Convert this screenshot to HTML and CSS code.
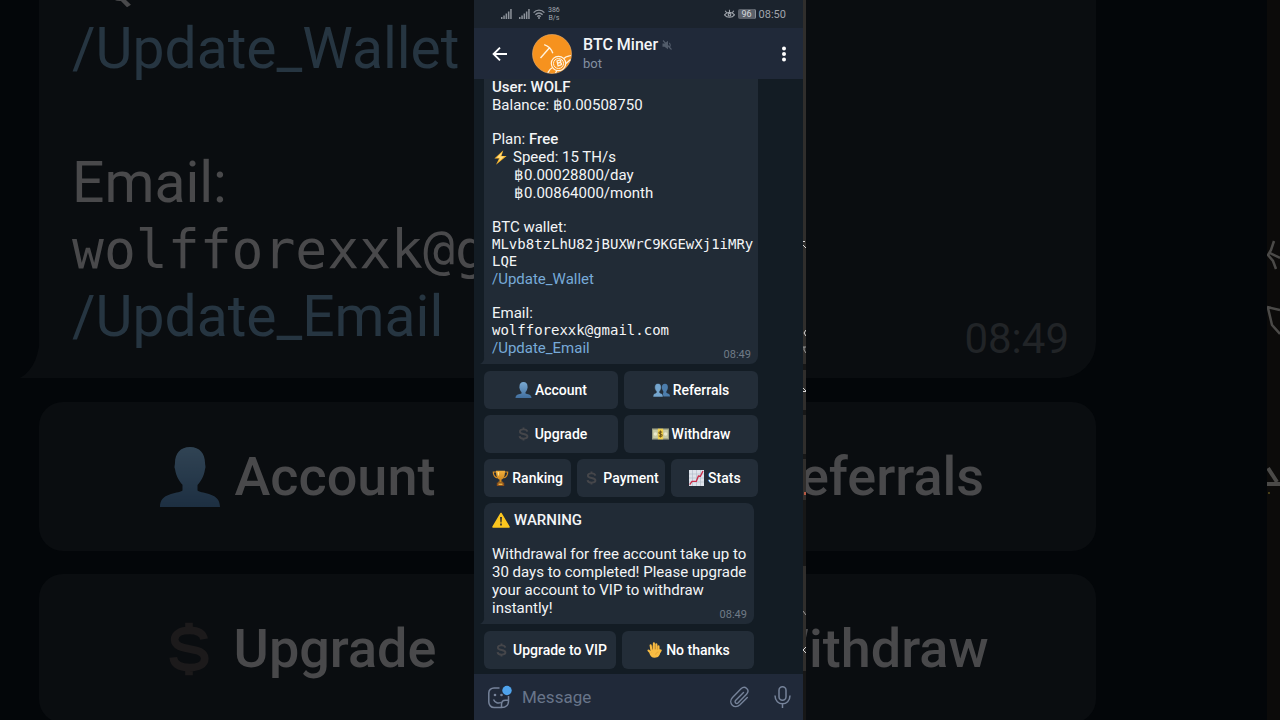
FILE: index.html
```html
<!DOCTYPE html>
<html lang="en">
<head>
<meta charset="utf-8">
<title>BTC Miner</title>
<link rel="stylesheet" href="styles.css">
</head>
<body>
<svg class="symbols" aria-hidden="true">
  <defs>
    <linearGradient id="blue" x1="0" y1="0" x2="0" y2="1"><stop offset="0" stop-color="#79a9d2"/><stop offset="1" stop-color="#416f9f"/></linearGradient>
    <linearGradient id="gold" x1="0" y1="0" x2="0" y2="1"><stop offset="0" stop-color="#f3b13c"/><stop offset="1" stop-color="#c77d17"/></linearGradient>
  </defs>
  <symbol id="person" viewBox="0 0 16 16"><path fill="url(#blue)" d="M8 0C5.4 0 4 1.800 4 4.200c0 .7-.3 1 0 1.700.3 2 1.200 3.300 2 4.200v1.500C4.500 12.600 0 12.100 0 16h16c0-3.900-4.500-3.400-6-4.400v-1.500c.8-.9 1.700-2.200 2-4.200.3-.7 0-1 0-1.700C12 1.800 10.600 0 8 0Z"/></symbol>
  <symbol id="people" viewBox="0 0 16 14"><path fill="#4c7dac" d="M11.300 1c-1.900 0-3 1.300-3 3.300 0 1.700.7 2.900 1.400 3.800v1.500L8.200 13H16c0-3.200-2.600-2.700-3.400-3.500V8.100c.8-.9 1.400-2.100 1.400-3.800C14 2.300 13.200 1 11.300 1Z"/><path fill="#74a5ce" stroke="#232d38" stroke-width=".5" d="M4.700.8C2.800.8 1.600 2.200 1.600 4.300c0 1.700.7 3 1.500 3.900v1.300C2.200 10.300 0 10 0 13.600h9.500c0-3.600-2.300-3.300-3.200-4.100V8.200c.8-.9 1.500-2.200 1.500-3.900C7.800 2.200 6.600.8 4.700.8Z"/></symbol>
  <symbol id="dollar" viewBox="0 0 12 16"><path fill="none" stroke="currentColor" stroke-width="2.200" d="M10.300 5.200C10 3.400 8.500 2.700 6.100 2.700c-2.600 0-4.200 1-4.200 2.600 0 3.800 8.600 1.600 8.600 5.400 0 1.700-1.800 2.600-4.300 2.600-2.800 0-4.500-.9-4.700-2.900M6 .5v2.500M6 13v2.500"/></symbol>
  <symbol id="cash" viewBox="0 0 16 12"><path fill="#c9cba6" d="M0 1h16v10H0z"/><path fill="#9ca083" d="M0 1h16v1H0zM0 10h16v1H0zM0 1h1v10H0zM15 1h1v10h-1z"/><circle cx="3.200" cy="6" r="1.600" fill="#eceacb"/><circle cx="12.800" cy="6" r="1.600" fill="#eceacb"/><path fill="#f1d14d" d="M5.500 1h5v10h-5z"/><path fill="none" stroke="#6e581c" stroke-width="1" d="M9.500 4.500C8.800 3.500 6.500 3.600 6.500 4.900 6.500 6.300 9.600 5.600 9.600 7.200c0 1.300-2.400 1.400-3.200.3M8 2.800v6.500"/></symbol>
  <symbol id="cup" viewBox="0 0 16 16"><path fill="none" stroke="#d88d22" stroke-width="1.200" d="M4 2H.8c0 3 1 5.200 4.200 6M12 2h3.200c0 3-1 5.200-4.200 6"/><path fill="url(#gold)" d="M3.500.7h9C12.500 6 11.500 8.600 9 9.500v2.200h1.400v1.100H5.600v-1.100H7V9.500C4.500 8.600 3.500 6 3.500.7Z"/><path fill="#8c4f1b" d="M4.300 12.600h7.400V16H4.300z"/><path fill="#e7b23f" d="M6 13.500h4V15H6z"/><path fill="#ffe08a" d="M5 2h1.500v4L5.500 5z"/></symbol>
  <symbol id="chart" viewBox="0 0 15 16"><path fill="#dfe4ec" d="M0 0h15v16H0z"/><path fill="none" stroke="#aeb8c8" stroke-width=".6" d="M3.500 0v16M7.500 0v16M11.500 0v16M0 4h15M0 8h15M0 12h15"/><path fill="none" stroke="#c92f4b" stroke-width="1.400" d="M.7 14.700 3 11.400l4.300 0L9.400 6l2 .2L14 1"/></symbol>
  <symbol id="hand" viewBox="0 0 15 16"><path fill="none" stroke="#f8bc43" stroke-width="2.100" stroke-linecap="round" d="M4.600 9 3.600 3.200M6.900 8V1.400M9.300 8V2.200M11.500 9V4.400M1.500 8.600l3.200 3.200M13.700 8.400 11.500 12"/><path fill="#f8bc43" d="M3.800 7.500 12.500 7l.8 2.500c-.5 4.500-2 6.200-5.500 6.200-3.300 0-4.500-2-5.500-4.500L4.500 11Z"/><path stroke="#d18e25" stroke-width=".5" fill="none" d="M5.600 3.500v4M8.100 3v4.500M10.400 4v4M11.500 10c-1.800.2-2.700 1.300-2.800 2.700"/></symbol>
  <symbol id="signal" viewBox="0 0 11 10"><path fill="#8d939b" d="M0 8h1.500v2H0zM2.300 6.500h1.500V10H2.300zM4.600 4.500h1.500V10H4.600zM6.900 2.500h1.500V10H6.900zM9.200 0h1.500v10H9.200z"/></symbol>
</svg>

<div class="stage">
  <div class="backdrop" aria-hidden="true">
    <div class="backdrop-main">
      <div class="big-bubble">
        <div class="mono">LQE</div>
        <div class="big-link">/Update_Wallet</div>
        <div>&nbsp;</div>
        <div>Email:</div>
        <div class="mono">wolfforexxk@gmail.com</div>
        <div class="big-link">/Update_Email</div>
        <span class="big-time">08:49</span>
        <svg class="big-tail" viewBox="0 0 20 46"><path fill="#0a0d10" d="M20 0C20 22 14 38 0 46H20Z"/></svg>
      </div>
      <div class="big-keys">
        <div class="big-key"><svg class="big-person"><use href="#person"/></svg>Account</div>
        <div class="big-key"><svg class="big-person"><use href="#people"/></svg>Referrals</div>
        <div class="big-key"><svg class="big-dollar"><use href="#dollar"/></svg>Upgrade</div>
        <div class="big-key"><svg class="big-person"><use href="#cash"/></svg>Withdraw</div>
      </div>
    </div>
    <div class="backdrop-edge">
      <svg viewBox="0 0 13 720" preserveAspectRatio="xMinYMin slice"><g fill="none" stroke="#4b4a48" stroke-width="2.500"><path d="M7 241 4 250 1 255 6 261 9 269M3 253 13 258M0 307 13 310M1 308 5 325 13 334"/><path d="M1 468 10 482M0 484H13" stroke-width="4"/></g><path fill="#463e18" d="M1 492h2v2H1z"/></svg>
    </div>
  </div>

  <main class="phone">
    <div class="screen">
      <div class="status">
        <svg class="signal"><use href="#signal"/></svg>
        <svg class="signal"><use href="#signal"/></svg>
        <svg class="wifi" viewBox="0 0 12 10"><g fill="none" stroke="#8d939b" stroke-width="1.300"><path d="M.6 3.600C3.500.2 8.500.2 11.400 3.600M2.400 5.700C4.500 3.400 7.500 3.400 9.600 5.700M4.200 7.600C5.300 6.500 6.700 6.500 7.800 7.600"/></g><circle cx="6" cy="9" r="1" fill="#8d939b"/></svg>
        <span class="rate">386<br>B/s</span>
        <svg class="eye" viewBox="0 0 11 10"><g fill="none" stroke="#a0a5ac" stroke-width="1.100"><path d="M.5 5.800C3 2.600 8 2.600 10.500 5.800 8 9 3 9 .5 5.800ZM5.500 3V.7M2.500 3.500 1.200 1.700M8.500 3.500 9.800 1.700"/><circle cx="5.500" cy="5.700" r="1.300"/></g></svg>
        <span class="battery">96</span>
        <span class="clock">08:50</span>
      </div>

      <header class="header">
        <button class="icon-button" aria-label="Back"><svg class="back" viewBox="0 0 16 16"><path fill="none" stroke="#fff" stroke-width="1.900" d="M15 8H1.800M8 1.600 1.600 8 8 14.400"/></svg></button>
        <svg class="avatar" viewBox="0 0 40 40"><circle cx="20" cy="20" r="19.500" fill="#f6921e" stroke="#f5b469" stroke-width=".6"/><g fill="none" stroke="#fff3df"><path stroke-width="1.400" d="M8.500 24 17.500 13.800M12.200 10.600C16.500 12 19.300 14.800 20.800 19.200"/><circle cx="26.500" cy="29.500" r="7.200" stroke-width="1.200"/><circle cx="26.500" cy="29.500" r="5" stroke-width="1"/><path stroke-width="1.300" d="M32 24.500C34 22 36.500 22.500 39 21.500M34 29.500 38.500 25.500M20.500 33.500C18 34.500 17 36.500 15.800 38.800M25 36.500 23.500 39M25 27l2.200-.8c1.800-.4 2.300 1.600.5 2.200l-1.700.6 1.700-.4c2-.3 2.500 2 .6 2.600l-2.200.7Z"/></g></svg>
        <div class="who">
          <h1>BTC Miner <svg class="muted" viewBox="0 0 10 10"><path fill="#525c6b" d="M.5 3.500h2L6 .8v8.400L2.500 6.700h-2z"/><path fill="none" stroke="#525c6b" stroke-width="1.100" d="M1 .5 9.500 9.500M7.200 2.800C8.500 4 8.500 6 7.500 7"/></svg></h1>
          <p>bot</p>
        </div>
        <button class="icon-button" aria-label="Menu"><svg class="dots" viewBox="0 0 6 16"><g fill="#fff"><circle cx="3" cy="2.500" r="2"/><circle cx="3" cy="8" r="2"/><circle cx="3" cy="13.500" r="2"/></g></svg></button>
      </header>

      <section class="chat">
        <article class="bubble">
          <p><b>User: WOLF</b></p>
          <p>Balance: ฿0.00508750</p>
          <p class="blank"></p>
          <p>Plan: <b>Free</b></p>
          <p class="with-icon"><svg class="bolt" viewBox="0 0 14 16"><path fill="#fbb92f" d="M10 .2.5 9h5L2.200 15.800 13.500 6.300H8Z"/><path fill="#ffe08c" d="M9 2 3 8.200h4L5 12 11 7H6.500Z"/></svg>Speed: 15 TH/s</p>
          <p class="indent">฿0.00028800/day</p>
          <p class="indent">฿0.00864000/month</p>
          <p class="blank"></p>
          <p>BTC wallet:</p>
          <p class="mono">MLvb8tzLhU82jBUXWrC9KGEwXj1iMRyLQE</p>
          <p><a href="#wallet">/Update_Wallet</a></p>
          <p class="blank"></p>
          <p>Email:</p>
          <p class="mono">wolfforexxk@gmail.com</p>
          <p><a href="#email">/Update_Email</a></p>
          <time class="time">08:49</time>
          <svg class="tail" viewBox="0 0 5 12"><path fill="#212b36" d="M5 0C5 6 4 10 0 12H5Z"/></svg>
        </article>

        <div class="keys">
          <div class="row">
            <button class="key"><svg class="emoji"><use href="#person"/></svg>Account</button>
            <button class="key"><svg class="emoji"><use href="#people"/></svg>Referrals</button>
          </div>
          <div class="row">
            <button class="key"><svg class="emoji coin"><use href="#dollar"/></svg>Upgrade</button>
            <button class="key"><svg class="emoji"><use href="#cash"/></svg>Withdraw</button>
          </div>
          <div class="row">
            <button class="key"><svg class="emoji"><use href="#cup"/></svg>Ranking</button>
            <button class="key"><svg class="emoji coin"><use href="#dollar"/></svg>Payment</button>
            <button class="key"><svg class="emoji"><use href="#chart"/></svg>Stats</button>
          </div>
        </div>

        <article class="bubble warning">
          <p class="with-icon"><svg class="alert" viewBox="0 0 18 16"><path fill="#fbc61f" stroke="#fbc61f" stroke-width="1.500" stroke-linejoin="round" d="M9 1.500 17 15H1Z"/><path fill="#3b3630" d="M8 5h2l-.4 5.500H8.400zM8.100 11.600h1.800v1.800H8.100z"/></svg><b>WARNING</b></p>
          <p class="blank"></p>
          <p>Withdrawal for free account take up to 30 days to completed! Please upgrade your account to VIP to withdraw instantly!</p>
          <time class="time">08:49</time>
          <svg class="tail" viewBox="0 0 5 12"><path fill="#212b36" d="M5 0C5 6 4 10 0 12H5Z"/></svg>
        </article>

        <div class="row warning">
          <button class="key"><svg class="emoji coin"><use href="#dollar"/></svg>Upgrade to VIP</button>
          <button class="key"><svg class="emoji"><use href="#hand"/></svg>No thanks</button>
        </div>
      </section>

      <form class="composer">
        <button type="button" class="icon-button" aria-label="Stickers"><svg class="sticker" viewBox="0 0 25 25"><path fill="none" stroke="#76839a" stroke-width="1.500" d="M12.500 3H7C4 3 1.800 5 1.800 8v9c0 3 2.200 5.500 5.200 5.500h7.500c4.500 0 7-2.500 7-6.500V11M14.500 22v-2.500c0-3 1.500-4.200 4-4.200h3M6.500 14.500c1.500 3.600 5 4.200 7.300 2.800"/><circle cx="8" cy="10" r="1.300" fill="#76839a"/><circle cx="14.500" cy="10" r="1.300" fill="#76839a"/><circle cx="20" cy="5.500" r="4.700" fill="#4fa3ec"/></svg></button>
        <input class="field" type="text" placeholder="Message" aria-label="Message">
        <button type="button" class="icon-button" aria-label="Attach"><svg class="clip" viewBox="0 0 20 22"><path fill="none" stroke="#76839a" stroke-width="1.400" stroke-linecap="round" d="M14.500 6.500 6.800 14.300c-1.800 2 .5 4.200 2.400 2.400l8.300-8.500c4-4.300-1.600-9.300-5.500-5.400L3.500 11.500c-5 5.500 2 12.500 7.500 7.300l7.300-7.300"/></svg></button>
        <button type="button" class="icon-button" aria-label="Record voice"><svg class="mic" viewBox="0 0 17 22"><g fill="none" stroke="#76839a" stroke-width="1.500"><rect x="5" y=".8" width="7" height="13.500" rx="3.500"/><path d="M1 9.500c0 11 15 11 15 0M8.500 17.800V22"/></g></svg></button>
      </form>
    </div>
    <div class="edge">
      <svg viewBox="0 0 3 720" preserveAspectRatio="xMinYMin slice"><path fill="#171717" d="M0 364h3v6H0zM0 410h3v5H0zM0 454h3v5H0zM0 500h3v66H0zM0 671h3v49H0z"/><g fill="none" stroke="#d8d8d8"><path d="M0 241.500H2M0 245 3 248M3 330 1 333 3 336M0 388 3 391M0 391.500H3M3 647 0 650 3 653"/><path stroke="#999" d="M0 347H3M1 347V350L3 353M0 611 3 615"/></g><path fill="#b65a45" d="M1 492h2v3H1z"/></svg>
    </div>
  </main>
</div>
</body>
</html>
```
FILE: styles.css
```css
* { box-sizing: border-box; }
body { margin: 0; background: #030609; font-family: Roboto, "Liberation Sans", sans-serif; color: #f3f5f7; }
p, h1 { margin: 0; }
button { font: inherit; color: inherit; border: 0; padding: 0; background: none; }
svg { display: block; flex: none; }
a { color: #77aad8; text-decoration: none; }
.symbols { position: absolute; width: 0; height: 0; }
.mono { font-family: "DejaVu Sans Mono", "Liberation Mono", monospace; }

.stage { position: relative; height: 100vh; overflow: hidden; display: flex; justify-content: center; }

/* Magnified, dimmed copy behind the phone */
.backdrop { position: absolute; inset: 0; display: flex; overflow: hidden; color: #49494b; font-size: 57px; line-height: 67px; }
.backdrop-main { flex: 1; padding: 0 171px 0 39px; }
.backdrop-edge { width: 13px; background: #0c0b0a; }
.backdrop-edge svg { width: 100%; height: 100%; }
.big-bubble { position: relative; margin-top: -52px; padding: 0 28px 28px 33px; background: #0a0d10; border-radius: 0 0 36px 0; }
.big-bubble .mono { font-size: 53px; }
.big-link { color: #263541; }
.big-time { position: absolute; right: 27px; bottom: 6px; font-size: 42px; color: #212427; }
.big-tail { position: absolute; left: -19px; bottom: 0; width: 20px; height: 46px; }
.big-keys { display: grid; grid-template-columns: 1fr 1fr; gap: 23px; margin-top: 24px; }
.big-key { display: flex; align-items: center; justify-content: center; gap: 15px; height: 149px; border-radius: 24px; background: #0a0d10; font-size: 54px; font-weight: 500; }
.big-person { width: 60px; height: 62px; opacity: .35; }
.big-dollar { width: 60px; height: 56px; color: #1c1a1b; }

/* Phone */
.phone { position: relative; width: 100%; max-width: 332px; display: flex; }
.screen { flex: 1; min-width: 0; display: flex; flex-direction: column; background: #131c24; }
.edge { width: 3px; background: #302e2c; }
.edge svg { width: 100%; height: 100%; }

.status { flex: none; height: 28px; display: flex; align-items: center; gap: 3px; padding: 0 17px 0 27px; background: #1b232d; color: #a0a5ac; }
.signal { width: 11px; height: 10px; margin-right: 4px; }
.signal + .signal { margin-right: 0; }
.wifi { width: 12px; height: 10px; }
.rate { font-size: 7px; line-height: 8px; text-align: center; }
.eye { width: 11px; height: 10px; margin-left: auto; }
.battery { padding: 0 3px; border-radius: 2px; background: #5a6069; color: #d5d8dc; font-size: 9px; line-height: 10px; border-right: 1px solid #8d939b; }
.clock { font-size: 11px; }

.header { flex: none; height: 51px; display: flex; align-items: center; padding: 0 12px 0 14px; background: #202939; }
.icon-button { display: flex; align-items: center; justify-content: center; min-width: 14px; }
.back { width: 24px; height: 16px; }
.avatar { width: 40px; height: 40px; margin-left: 20px; }
.who { flex: 1; padding-left: 11px; }
.who h1 { display: flex; align-items: center; gap: 4px; font-size: 16px; line-height: 20px; font-weight: 500; }
.who p { font-size: 13px; line-height: 17px; color: #8490a1; }
.muted { width: 10px; height: 10px; }
.dots { width: 6px; height: 16px; }

.chat { flex: 1; min-height: 0; overflow: hidden; display: flex; flex-direction: column; justify-content: flex-end; padding: 0 45px 5px 10px; }
.bubble { position: relative; flex: none; padding: 8px 4px 7px 8px; background: #212b36; border-radius: 8px 8px 8px 0; font-size: 15px; line-height: 18px; }
.bubble b { font-weight: 500; }
.bubble .mono { font-size: 14px; line-height: 17px; word-break: break-all; }
.bubble .blank { height: 16px; }
.with-icon { display: flex; align-items: center; gap: 4px; }
.bolt { width: 17px; height: 15px; }
.alert { width: 18px; height: 16px; }
.indent { padding-left: 22px; }
.time { position: absolute; right: 7px; bottom: 2px; font-size: 11px; line-height: 14px; color: #707b87; }
.tail { position: absolute; left: -4px; bottom: 0; width: 5px; height: 12px; }
.keys { flex: none; display: grid; gap: 6px; margin: 7px 0 6px; }
.row { flex: none; display: flex; gap: 6px; }
.key { flex: 1 1 0; height: 38px; display: flex; align-items: center; justify-content: center; gap: 3px; border-radius: 6px; background: #232d38; color: #fff; font-size: 14px; font-weight: 500; white-space: nowrap; }
.emoji { width: 17px; height: 16px; }
.coin { height: 14px; color: #45464a; }
.warning { margin-right: 4px; }
.bubble.warning { padding-bottom: 7px; }
.row.warning { margin-top: 7px; }

.composer { flex: none; height: 46px; display: flex; align-items: center; padding: 0 12px 0 13px; background: #202939; }
.sticker { width: 25px; height: 25px; }
.field { flex: 1; min-width: 0; padding: 0 10px; border: 0; background: none; color: #fff; font: 17px Roboto, "Liberation Sans", sans-serif; }
.field::placeholder { color: #68758a; opacity: 1; }
.clip { width: 20px; height: 22px; }
.mic { width: 17px; height: 22px; margin-left: 25px; }
```
